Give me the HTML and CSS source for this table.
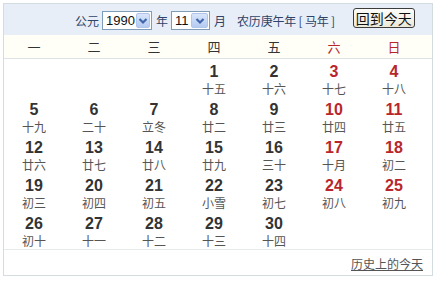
FILE: index.html
```html
<!DOCTYPE html>
<html lang="zh">
<head>
<meta charset="utf-8">
<link rel="stylesheet" href="styles.css">
</head>
<body>
<div class="cal">
  <div class="head">
    <span class="lbl">公元</span>
    <div class="sel sel-year"><span class="val">1990</span><span class="arr"><svg width="10" height="8" viewBox="0 0 10 8"><path d="M1.5 2 L5 5.5 L8.5 2" fill="none" stroke="#3f66a8" stroke-width="2.2"/></svg></span></div>
    <span class="lbl">年</span>
    <div class="sel sel-month"><span class="val">11</span><span class="arr"><svg width="10" height="8" viewBox="0 0 10 8"><path d="M1.5 2 L5 5.5 L8.5 2" fill="none" stroke="#3f66a8" stroke-width="2.2"/></svg></span></div>
    <span class="lbl">月</span>
    <span class="lunar-year">农历庚午年 [ 马年 ]</span>
    <button class="today">回到今天</button>
  </div>
  <div class="week">
    <span>一</span><span>二</span><span>三</span><span>四</span><span>五</span><span class="we">六</span><span class="we">日</span>
  </div>
  <div class="days">
    <div class="day"></div><div class="day"></div><div class="day"></div>
    <div class="day"><b>1</b><i>十五</i></div>
    <div class="day"><b>2</b><i>十六</i></div>
    <div class="day we"><b>3</b><i>十七</i></div>
    <div class="day we"><b>4</b><i>十八</i></div>
    <div class="day"><b>5</b><i>十九</i></div>
    <div class="day"><b>6</b><i>二十</i></div>
    <div class="day"><b>7</b><i>立冬</i></div>
    <div class="day"><b>8</b><i>廿二</i></div>
    <div class="day"><b>9</b><i>廿三</i></div>
    <div class="day we"><b>10</b><i>廿四</i></div>
    <div class="day we"><b>11</b><i>廿五</i></div>
    <div class="day"><b>12</b><i>廿六</i></div>
    <div class="day"><b>13</b><i>廿七</i></div>
    <div class="day"><b>14</b><i>廿八</i></div>
    <div class="day"><b>15</b><i>廿九</i></div>
    <div class="day"><b>16</b><i>三十</i></div>
    <div class="day we"><b>17</b><i>十月</i></div>
    <div class="day we"><b>18</b><i>初二</i></div>
    <div class="day"><b>19</b><i>初三</i></div>
    <div class="day"><b>20</b><i>初四</i></div>
    <div class="day"><b>21</b><i>初五</i></div>
    <div class="day"><b>22</b><i>小雪</i></div>
    <div class="day"><b>23</b><i>初七</i></div>
    <div class="day we"><b>24</b><i>初八</i></div>
    <div class="day we"><b>25</b><i>初九</i></div>
    <div class="day"><b>26</b><i>初十</i></div>
    <div class="day"><b>27</b><i>十一</i></div>
    <div class="day"><b>28</b><i>十二</i></div>
    <div class="day"><b>29</b><i>十三</i></div>
    <div class="day"><b>30</b><i>十四</i></div>
  </div>
  <div class="foot"><a class="hist">历史上的今天</a></div>
</div>
</body>
</html>
```

FILE: styles.css
```css
html, body {
  margin: 0;
  padding: 0;
  background: #fff;
}
body {
  padding: 3px 0 0 3px;
  font-family: "Liberation Sans", "Noto Sans CJK SC", sans-serif;
}
.cal {
  width: 428px;
  border: 1px solid #d3dcdf;
  background: #fff;
}
.head {
  height: 31px;
  background: #e8eef8;
  display: flex;
  align-items: center;
  padding-left: 71px;
  font-size: 12px;
  color: #2f4468;
  font-family: "Noto Sans CJK SC", sans-serif;
}
.lbl {
  line-height: 14px;
  margin-top: 2px;
}
.sel {
  height: 17px;
  border: 1px solid #7f9db9;
  background: #fff;
  display: flex;
  align-items: stretch;
  margin: 2px 4px 0 3px;
  font-family: "Liberation Sans", sans-serif;
  font-size: 13px;
  color: #111;
}
.sel-year { width: 48px; }
.sel-month { width: 37px; margin-left: 3px; }
.sel .val {
  flex: 1;
  line-height: 17px;
  padding-left: 3px;
}
.sel .arr {
  width: 15px;
  margin: 1px;
  border-radius: 2px;
  background: linear-gradient(#d9e5fb, #b5caf2);
  border: 1px solid #b0c4ec;
  display: flex;
  align-items: center;
  justify-content: center;
}
.lunar-year {
  margin-left: 11px;
  margin-top: 2px;
  line-height: 14px;
  letter-spacing: -0.2px;
}
.today {
  margin-left: 18px;
  margin-top: -3px;
  width: 62px;
  height: 20px;
  padding: 0;
  border: 1px solid #3c3c3c;
  border-radius: 3px;
  background: linear-gradient(#fdfdfb, #ece9d8);
  font-family: "Noto Sans CJK SC", sans-serif;
  font-size: 14px;
  line-height: 18px;
  color: #111;
}
.week {
  height: 23px;
  background: #fffff8;
  border-bottom: 1px solid #dde3e6;
  display: grid;
  grid-template-columns: repeat(7, 60px);
  align-items: center;
  font-family: "Noto Sans CJK SC", sans-serif;
  font-size: 13px;
  color: #333;
  text-align: center;
}
.week .we { color: #b8262c; }
.days {
  display: grid;
  grid-template-columns: repeat(7, 60px);
  grid-auto-rows: 38px;
  border-bottom: 1px solid #e6eaeb;
}
.day {
  display: flex;
  flex-direction: column;
  align-items: center;
  padding-top: 4px;
  box-sizing: border-box;
}
.day b {
  font-family: "Liberation Sans", sans-serif;
  font-weight: bold;
  font-size: 16px;
  line-height: 18px;
  color: #333;
}
.day i {
  font-style: normal;
  font-family: "Noto Sans CJK SC", sans-serif;
  font-size: 12px;
  line-height: 16px;
  color: #555;
}
.day.we b { color: #b8262c; }
.foot {
  height: 25px;
  display: flex;
  align-items: center;
  justify-content: flex-end;
  padding-right: 9px;
}
.hist {
  font-family: "Noto Sans CJK SC", sans-serif;
  font-size: 12px;
  color: #555;
  text-decoration: underline;
  margin-top: 2px;
}
```
